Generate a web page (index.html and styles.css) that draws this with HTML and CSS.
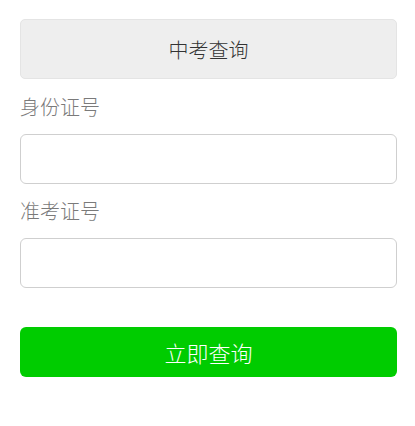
FILE: index.html
```html
<!DOCTYPE html>
<html lang="zh-CN">
<head>
<meta charset="utf-8">
<title>中考查询</title>
<link rel="stylesheet" href="styles.css">
</head>
<body>
<div class="page">
  <div class="header">中考查询</div>
  <form class="form">
    <label class="label" for="idcard">身份证号</label>
    <input class="input" id="idcard" type="text">
    <label class="label" for="ticket">准考证号</label>
    <input class="input" id="ticket" type="text">
    <button class="submit" type="button">立即查询</button>
  </form>
</div>
</body>
</html>
```
FILE: styles.css
```css
html, body {
  margin: 0;
  padding: 0;
  background: #ffffff;
}
body {
  font-family: "Noto Sans CJK SC", "Liberation Serif", serif;
}
.page {
  padding: 19px 18px 0 20px;
}
.header {
  height: 58px;
  border: 1px solid #e4e4e4;
  border-radius: 5px;
  background: #eeeeee;
  color: #333333;
  font-size: 20px;
  font-weight: 300;
  display: flex;
  align-items: center;
  justify-content: center;
}
.form {
  display: flex;
  flex-direction: column;
  margin: 0;
}
.label {
  display: block;
  padding: 12px 0 12px;
  line-height: 30px;
  font-size: 20px;
  font-weight: 300;
  color: #7a7a7a;
}
.label:first-child {
  padding-top: 13px;
}
.input {
  box-sizing: border-box;
  height: 50px;
  margin: 0;
  border: 1px solid #cfcfcf;
  border-radius: 6px;
  background: #ffffff;
  outline: none;
  font-size: 18px;
  padding: 0 10px;
}
.submit {
  margin-top: 39px;
  height: 50px;
  border: none;
  border-radius: 6px;
  background: #00cc00;
  color: #ffffff;
  font-family: "Noto Sans CJK SC", sans-serif;
  font-size: 22px;
  font-weight: 300;
  padding: 0;
}
```
